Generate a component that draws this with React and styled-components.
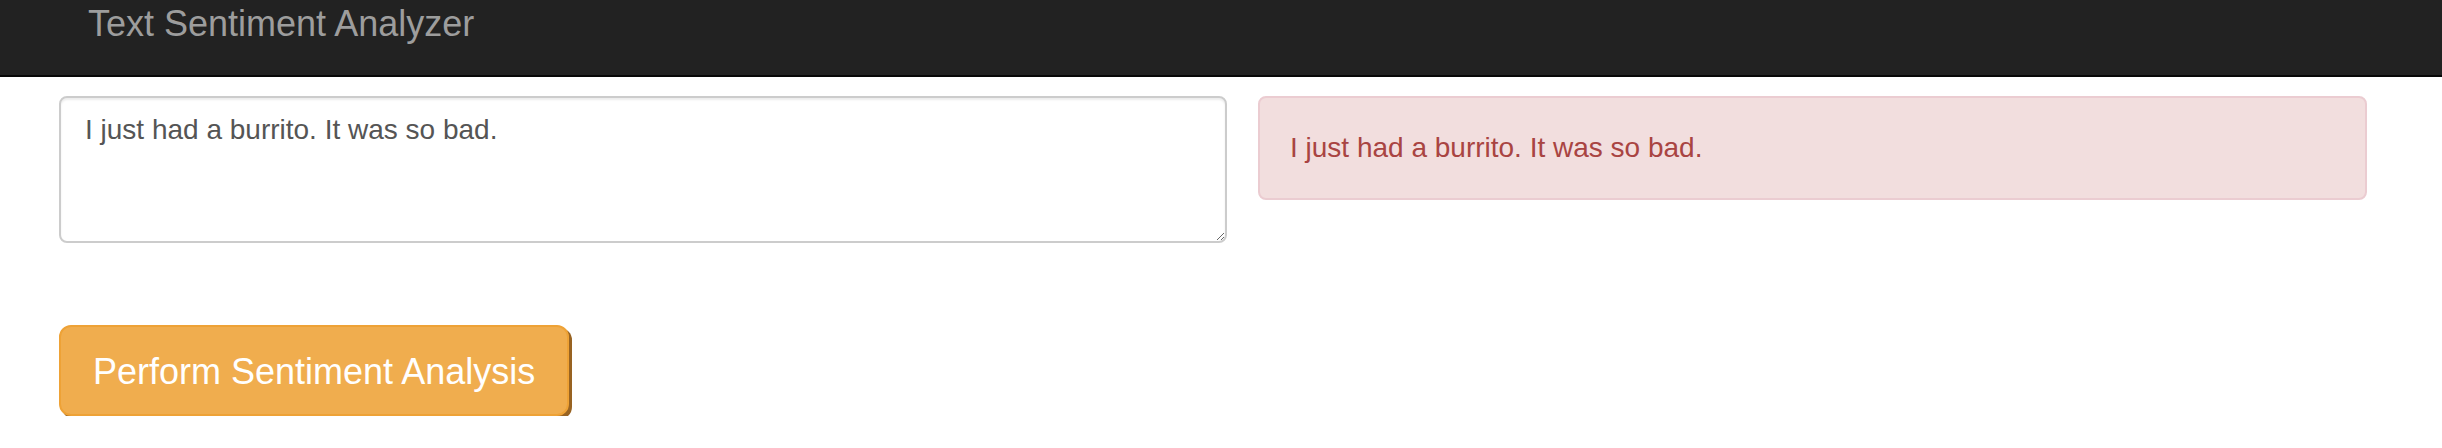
import React, { useState } from "react";
import styled, { createGlobalStyle } from "styled-components";

const GlobalStyle = createGlobalStyle`
  body {
    margin: 0;
    background: #fff;
    font-family: "Liberation Sans", Arial, Helvetica, sans-serif;
  }
  * {
    box-sizing: border-box;
  }
`;

const Navbar = styled.nav`
  height: 77px;
  background: #222;
  border-bottom: 2px solid #080808;
  padding: 4px 0 0 88px;
`;

const Brand = styled.div`
  color: #9d9d9d;
  font-size: 36px;
  line-height: 40px;
`;

const Main = styled.main`
  padding: 19px 75px 0 59px;
`;

const Row = styled.div`
  display: grid;
  grid-template-columns: 1168px 1fr;
  gap: 31px;
  align-items: start;
`;

const TextInput = styled.textarea`
  display: block;
  width: 100%;
  height: 147px;
  padding: 12px 24px;
  border: 2px solid #ccc;
  border-radius: 8px;
  font-family: inherit;
  font-size: 28px;
  line-height: 40px;
  color: #555;
  background: #fff;
  box-shadow: inset 0 2px 2px rgba(0, 0, 0, 0.075);
  outline: none;
`;

const Alert = styled.div`
  padding: 30px;
  background: #f2dede;
  border: 2px solid #ebccd1;
  border-radius: 8px;
  color: #a94442;
  font-size: 28px;
  line-height: 40px;
`;

const Button = styled.button`
  display: block;
  margin-top: 82px;
  padding: 21px 32px 18px;
  background: #f0ad4e;
  border: 2px solid #eea236;
  border-radius: 12px;
  box-shadow: 3px 3px 0 #986322;
  color: #fff;
  font-family: inherit;
  font-size: 36px;
  line-height: 48px;
  cursor: pointer;
`;

export default function App() {
  const [text, setText] = useState("I just had a burrito. It was so bad.");

  return (
    <>
      <GlobalStyle />
      <Navbar>
        <Brand>Text Sentiment Analyzer</Brand>
      </Navbar>
      <Main>
        <Row>
          <TextInput value={text} onChange={(e) => setText(e.target.value)} />
          <Alert>I just had a burrito. It was so bad.</Alert>
        </Row>
        <Button>Perform Sentiment Analysis</Button>
      </Main>
    </>
  );
}
